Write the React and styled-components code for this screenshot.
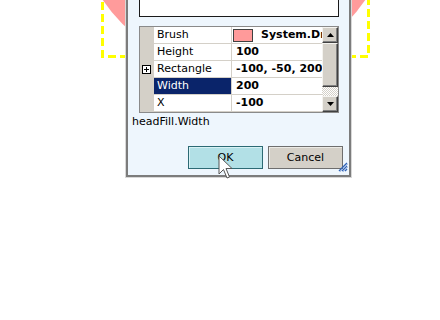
import React from "react";
import styled, { createGlobalStyle } from "styled-components";

const Global = createGlobalStyle`
  *, *::before, *::after { box-sizing: border-box; }
  html, body { margin: 0; padding: 0; background: #ffffff; overflow: hidden; }
  body { font-family: "DejaVu Sans", Verdana, sans-serif; }
`;

const Stage = styled.div`
  position: relative;
  width: 440px;
  height: 320px;
  overflow: hidden;
  background: #ffffff;
`;

const Canvas = styled.svg`
  position: absolute;
  left: 0;
  top: 0;
`;

const Dialog = styled.div`
  position: absolute;
  left: 126px;
  top: -30px;
  width: 225px;
  border: 2px solid #7c7c7c;
  box-shadow: 0 0 0 1px #d8d8d8;
  background: #eef6fd;
  padding: 8px 10px 6px 11px;
  display: flex;
  flex-direction: column;
`;

const TextBox = styled.div`
  height: 37px;
  background: #ffffff;
  border: 1px solid #1a1a1a;
`;

const Grid = styled.div`
  margin-top: 9px;
  border: 1px solid #8a8a8a;
  display: flex;
  background: #ffffff;
`;

const Rows = styled.div`
  flex: 1;
  min-width: 0;
  display: flex;
  flex-direction: column;
`;

const Row = styled.div`
  display: grid;
  grid-template-columns: 14px 78px minmax(0, 1fr);
  height: 17px;
`;

const Gutter = styled.div`
  background: #d4d0c8;
  display: flex;
  align-items: center;
  justify-content: center;
  padding-right: 1px;
`;

const NameCell = styled.div`
  border-right: 1px solid #d4d0c8;
  border-bottom: 1px solid #d4d0c8;
  background: ${(p) => (p.$selected ? "#0a246a" : "#ffffff")};
  color: ${(p) => (p.$selected ? "#ffffff" : "#000000")};
  font-size: 11px;
  line-height: 16px;
  padding-left: 3px;
  white-space: nowrap;
  overflow: hidden;
`;

const ValueCell = styled.div`
  border-bottom: 1px solid #d4d0c8;
  font-size: 11px;
  font-weight: bold;
  line-height: 16px;
  padding-left: 4px;
  white-space: nowrap;
  overflow: hidden;
  display: flex;
  align-items: center;
  color: #000000;
`;

const Swatch = styled.span`
  flex: none;
  width: 20px;
  height: 13px;
  margin-left: -3px;
  margin-right: 8px;
  background: #ff9a9a;
  border: 1px solid #404040;
`;

const ScrollBar = styled.div`
  width: 16px;
  flex: none;
  display: flex;
  flex-direction: column;
`;

const raised = `
  background: #d4d0c8;
  border-top: 1px solid #f4f3ef;
  border-left: 1px solid #f4f3ef;
  border-right: 1px solid #404040;
  border-bottom: 1px solid #404040;
  box-shadow: inset -1px -1px 0 #808080;
`;

const ScrollButton = styled.div`
  ${raised}
  height: 16px;
  display: flex;
  align-items: center;
  justify-content: center;
`;

const Thumb = styled.div`
  ${raised}
  height: 44px;
`;

const Track = styled.div`
  flex: 1;
  background: repeating-conic-gradient(#d4d0c8 0 25%, #ffffff 0 50%) 0 0 / 2px 2px;
`;

const Label = styled.div`
  margin: 2px 0 0 -7px;
  font-size: 11px;
  line-height: 14px;
  color: #000000;
`;

const ButtonRow = styled.div`
  margin-top: 17px;
  margin-right: -4px;
  display: flex;
  justify-content: flex-end;
  gap: 5px;
`;

const Button = styled.button`
  width: 75px;
  height: 23px;
  margin: 0;
  padding: 0;
  font-family: "DejaVu Sans", Verdana, sans-serif;
  font-size: 11px;
  color: #000000;
  background: ${(p) => (p.$primary ? "#b2e0e6" : "#d4d0c8")};
  border: 1px solid ${(p) => (p.$primary ? "#2c6a74" : "#6e6e6e")};
  box-shadow: inset 1px 1px 0 ${(p) => (p.$primary ? "#d8f2f5" : "#ecebe6")};
`;

const Grip = styled.svg`
  position: absolute;
  right: 1px;
  bottom: 3px;
`;

const Cursor = styled.svg`
  position: absolute;
  left: 218px;
  top: 155px;
`;

const Arrow = ({ down }) => (
  <svg width="7" height="4" viewBox="0 0 7 4">
    <path d={down ? "M0 0 H7 L3.5 4 Z" : "M0 4 H7 L3.5 0 Z"} fill="#000" />
  </svg>
);

const PlusBox = () => (
  <svg width="9" height="9" viewBox="0 0 9 9">
    <rect x="0.5" y="0.5" width="8" height="8" fill="#ffffff" stroke="#000" />
    <path d="M2 4.5 H7 M4.5 2 V7" stroke="#000" />
  </svg>
);

const rows = [
  { name: "Brush", value: "System.Drawing.SolidBrush", swatch: true },
  { name: "Height", value: "100" },
  { name: "Rectangle", value: "-100, -50, 200, 100", expand: true },
  { name: "Width", value: "200", selected: true },
  { name: "X", value: "-100" },
];

export default function App() {
  return (
    <Stage>
      <Global />
      <Canvas width="440" height="320" viewBox="0 0 440 320">
        <circle cx="234" cy="-88" r="158" fill="#ff9b9b" />
        <path
          d="M102.5 -10 V56.5 H368.5 V-10"
          fill="none"
          stroke="#ffff00"
          strokeWidth="3"
          strokeDasharray="8 4"
        />
      </Canvas>
      <Dialog>
        <TextBox />
        <Grid>
          <Rows>
            {rows.map((r) => (
              <Row key={r.name}>
                <Gutter>{r.expand ? <PlusBox /> : null}</Gutter>
                <NameCell $selected={r.selected}>{r.name}</NameCell>
                <ValueCell>
                  {r.swatch ? <Swatch /> : null}
                  {r.value}
                </ValueCell>
              </Row>
            ))}
          </Rows>
          <ScrollBar>
            <ScrollButton>
              <Arrow />
            </ScrollButton>
            <Thumb />
            <Track />
            <ScrollButton>
              <Arrow down />
            </ScrollButton>
          </ScrollBar>
        </Grid>
        <Label>headFill.Width</Label>
        <ButtonRow>
          <Button $primary>OK</Button>
          <Button>Cancel</Button>
        </ButtonRow>
        <Grip width="12" height="12" viewBox="0 0 12 12">
          <path d="M11 3 L3 11 M11 6 L6 11 M11 9 L9 11" stroke="#2f63b8" strokeWidth="1.4" />
          <path d="M12 4 L4 12 M12 7 L7 12" stroke="#9fb8e0" strokeWidth="0.8" />
        </Grip>
      </Dialog>
      <Cursor width="15" height="25" viewBox="0 0 15 25">
        <path
          d="M1 1 V19 L5.5 14.5 L9 23 L11.5 22 L8 13.5 H14 Z"
          fill="#ffffff"
          stroke="#555"
          strokeWidth="1"
          strokeLinejoin="round"
        />
      </Cursor>
    </Stage>
  );
}
